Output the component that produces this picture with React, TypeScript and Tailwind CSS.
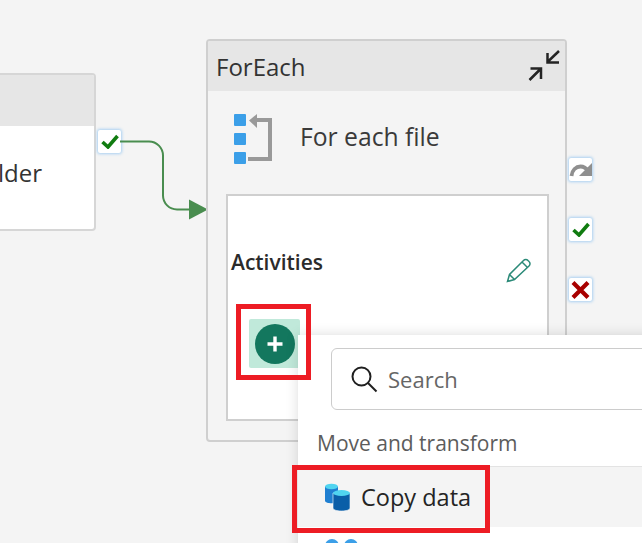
import React from 'react';

const font = 'font-["Open_Sans","Noto_Sans",sans-serif]';

const Port: React.FC<{ className: string; children: React.ReactNode }> = ({ className, children }) => (
  <div className={`absolute w-[23px] h-[23px] bg-white rounded-[2px] shadow-[0_0_3px_1px_#a9d0f2] flex items-center justify-center ${className}`}>
    {children}
  </div>
);

const Check = () => (
  <svg width="18" height="15" viewBox="0 0 18 15">
    <path d="M1.5 8l5.500 5L16.500 2" fill="none" stroke="#107c10" strokeWidth="3.6" />
  </svg>
);

export default function App() {
  return (
    <div className={`relative w-[642px] h-[543px] overflow-hidden bg-[#f4f4f4] ${font}`}>
      {/* Previous activity */}
      <div className="absolute left-[-20px] top-[73px] w-[116px] h-[158px] bg-white border-2 border-[#d6d6d6] rounded-[4px] overflow-hidden">
        <div className="h-[51px] bg-[#e6e6e6]" />
        <div className="pl-[16px] pt-[31px] text-[24px] leading-[32px] text-[#333333] whitespace-nowrap">lder</div>
      </div>
      <Port className="left-[98px] top-[130px]"><Check /></Port>

      {/* Connector */}
      <svg className="absolute left-[120px] top-[135px]" width="90" height="90" viewBox="0 0 90 90">
        <path d="M0 6.5h29a14 14 0 0 1 14 14v40a14 14 0 0 0 14 14h14" fill="none" stroke="#498d4f" strokeWidth="2" />
        <path d="M69 64.5l19 10-19 10z" fill="#498d4f" />
      </svg>

      {/* ForEach container */}
      <div className="absolute left-[206px] top-[39px] w-[361px] h-[403px] bg-[#f4f4f4] border-2 border-[#cfcfcf] rounded-[4px] overflow-hidden">
        <div className="h-[50px] bg-[#e6e6e6] flex items-center justify-between pl-[8px] pr-[3px]">
          <span className="text-[24px] leading-[32px] text-[#333333] pt-[2px]">ForEach</span>
          <svg width="36" height="36" viewBox="0 0 36 36">
            <path d="M33 3L21.500 14M21.500 5v9.500H33M3.500 32L15 20.500M4.500 20.500H15V31" fill="none" stroke="#242424" strokeWidth="2.5" />
          </svg>
        </div>
        <div className="flex items-center h-[90px] pl-[26px] gap-[26px]">
          <svg className="mt-[6px]" width="40" height="50" viewBox="0 0 40 50">
            <rect x="0" y="0" width="12" height="12" rx="1" fill="#3b9fe8" />
            <rect x="0" y="19" width="12" height="12" rx="1" fill="#3b9fe8" />
            <rect x="0" y="38" width="12" height="12" rx="1" fill="#3b9fe8" />
            <path d="M22 6h14v39H14" fill="none" stroke="#999999" strokeWidth="4" />
            <path d="M15 6.500L23 0v14z" fill="#999999" />
          </svg>
          <span className="text-[24.700px] leading-[32px] text-[#3a3a3a] pt-[2px]">For each file</span>
        </div>
        <div className="flex flex-col ml-[18px] mt-[13px] w-[323px] h-[227px] bg-white border-2 border-[#cfcfcf]">
          <div className="flex items-start justify-between pl-[3px] pr-[15px] pt-[52px]">
            <span className="text-[21px] leading-[28px] font-semibold text-[#2b2b2b]">Activities</span>
            <svg className="mt-[9px]" width="26" height="26" viewBox="0 0 26 26">
              <path d="M1.5 24.500l2-7L17.500 3.500a3 3 0 0 1 4.500 0l1 1a3 3 0 0 1 0 4.500L8.500 22.500zM3.500 17.500l5 5M16 5l5 5" fill="none" stroke="#2b8a78" strokeWidth="1.5" />
            </svg>
          </div>
          <div className="ml-[21px] mt-[36px] w-[51px] h-[49px] bg-[#c0e9da] rounded-[2px] flex items-center justify-center">
            <div className="w-[40px] h-[40px] rounded-full bg-[#13775e] flex items-center justify-center">
              <svg width="18" height="18" viewBox="0 0 18 18">
                <path d="M9 1.500v15M1.500 9h15" stroke="#ffffff" strokeWidth="3.4" />
              </svg>
            </div>
          </div>
        </div>
      </div>

      {/* Output ports */}
      <Port className="left-[569px] top-[158px]">
        <svg width="23" height="19" viewBox="0 0 23 19">
          <path d="M2.500 16C3 10 7 6.500 11.500 6.500c3 0 6 2 8 5" fill="none" stroke="#8f8f8f" strokeWidth="3.8" />
          <path d="M23 3v13H10z" fill="#8f8f8f" />
        </svg>
      </Port>
      <Port className="left-[569px] top-[218px]"><Check /></Port>
      <Port className="left-[569px] top-[278px]">
        <svg width="19" height="18" viewBox="0 0 19 18">
          <path d="M2 1.500l15 15M17 1.500l-15 15" stroke="#a80000" strokeWidth="4.200" />
        </svg>
      </Port>

      {/* Add activity menu */}
      <div className="absolute left-[298px] top-[335px] w-[360px] h-[230px] flex flex-col bg-white shadow-[0_0_12px_rgba(0,0,0,0.14)]">
        <div className="ml-[33px] mt-[13px] w-[330px] h-[62px] shrink-0 border border-[#cccccc] rounded-[6px] flex items-center pl-[18px] gap-[10px]">
          <svg width="28" height="28" viewBox="0 0 28 28">
            <circle cx="11.500" cy="11.500" r="9" fill="none" stroke="#1f1f1f" strokeWidth="2" />
            <path d="M18 18l8.500 8.500" stroke="#1f1f1f" strokeWidth="2" />
          </svg>
          <span className="text-[22px] leading-[30px] text-[#666666]">Search</span>
        </div>
        <div className="ml-[19px] mt-[19px] text-[21px] leading-[28px] text-[#5c5c5c] whitespace-nowrap">Move and transform</div>
        <div className="ml-[17px] mt-[9px] h-px bg-[#e3e3e3]" />
        <div className="h-[60px] bg-[#f4f4f4] flex items-center pl-[27px] gap-[11px]">
          <svg width="25" height="28" viewBox="0 0 25 28">
            <path d="M0 3.500v14c0 1.800 3 2.800 6.500 2.800S13 19.300 13 17.500v-14z" fill="#1f7fd1" />
            <ellipse cx="6.500" cy="3.500" rx="6.500" ry="2.800" fill="#50d4f0" />
            <path d="M8 10v15c0 1.800 3.700 3 8.500 3s8.500-1.200 8.500-3V10z" fill="#0a5ea8" stroke="#ffffff" strokeWidth="0.6" />
            <ellipse cx="16.500" cy="10" rx="8.500" ry="3" fill="#50d4f0" />
          </svg>
          <span className="text-[23.500px] leading-[30px] text-[#242424]">Copy data</span>
        </div>
        <svg className="ml-[26px] mt-[11px]" width="36" height="10" viewBox="0 0 36 10">
          <circle cx="8" cy="8" r="7" fill="#3b9fe8" />
          <circle cx="27" cy="8" r="7" fill="#3b9fe8" />
        </svg>
      </div>

      {/* Callouts */}
      <div className="absolute left-[236px] top-[304px] w-[75px] h-[76px] border-[5px] border-[#ed1c24]" />
      <div className="absolute left-[292px] top-[465px] w-[198px] h-[68px] border-[5px] border-[#ed1c24]" />
    </div>
  );
}
